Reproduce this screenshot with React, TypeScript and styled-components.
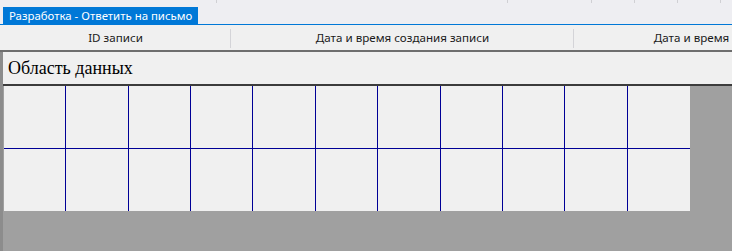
import React from 'react'
import styled, { createGlobalStyle } from 'styled-components'

const GlobalStyle = createGlobalStyle`
  html, body {
    margin: 0;
    padding: 0;
    background: #a0a0a0;
  }
`

const UI_FONT = `'Noto Sans', 'Open Sans', 'Liberation Sans', sans-serif`

const Window = styled.div`
  width: 732px;
  height: 251px;
  overflow: hidden;
  display: flex;
  flex-direction: column;
  background: #a0a0a0;
`

const TickStrip = styled.div`
  height: 7px;
  display: flex;
  background: #eeeef2;
`

const Tick = styled.div<{ w: number }>`
  width: ${(p) => p.w}px;
  flex: none;
  height: 3px;
  border-right: 1px solid #d0d0d4;
  box-sizing: border-box;
`

const TabBar = styled.div`
  height: 18px;
  display: flex;
  align-items: flex-end;
  padding-left: 3px;
  background: #eeeef2;
  border-bottom: 1px solid #0078d7;
  box-sizing: border-box;
`

const Tab = styled.div`
  height: 17px;
  width: 195px;
  background: #0078d7;
  color: #ffffff;
  font-family: ${UI_FONT};
  font-size: 11.4px;
  line-height: 17px;
  padding-left: 6px;
  box-sizing: border-box;
  white-space: nowrap;
  overflow: hidden;
`

const HeaderRow = styled.div`
  height: 27px;
  display: flex;
  background: #f0f0f0;
  border-bottom: 2px solid #6e6e6e;
  box-sizing: border-box;
  overflow: hidden;
`

const HeaderCell = styled.div<{ w: number; last?: boolean }>`
  width: ${(p) => p.w}px;
  flex: none;
  display: flex;
  align-items: center;
  justify-content: center;
  font-family: ${UI_FONT};
  font-size: 11.6px;
  color: #1a1a1a;
  white-space: nowrap;
  position: relative;
  &::after {
    content: '';
    display: ${(p) => (p.last ? 'none' : 'block')};
    position: absolute;
    right: 0;
    top: 4px;
    bottom: 2px;
    width: 1px;
    background: #d4d4d8;
  }
`

const Body = styled.div`
  flex: 1;
  display: flex;
  flex-direction: column;
  border-left: 3px solid #8c8c8c;
  background: #a0a0a0;
`

const Title = styled.div`
  height: 34px;
  display: flex;
  align-items: center;
  padding-left: 5px;
  background: #f0f0f0;
  font-family: 'Liberation Serif', 'Times New Roman', serif;
  font-size: 18px;
  color: #000;
  border-bottom: 2px solid #3c3c3c;
  box-sizing: border-box;
`

const Grid = styled.div`
  width: 686px;
  height: 125px;
  margin-left: 1px;
  display: grid;
  grid-template-columns: repeat(11, 1fr);
  grid-template-rows: repeat(2, 1fr);
  background: #f0f0f0;
`

const Cell = styled.div<{ lastCol: boolean; lastRow: boolean }>`
  border-right: ${(p) => (p.lastCol ? 'none' : '1px solid #000096')};
  border-bottom: ${(p) => (p.lastRow ? 'none' : '1px solid #000096')};
`

const ticks = [217, 291, 84, 43, 43, 43]

export default function App() {
  const cells = []
  for (let r = 0; r < 2; r++) {
    for (let c = 0; c < 11; c++) {
      cells.push(<Cell key={`${r}-${c}`} lastCol={c === 10} lastRow={r === 1} />)
    }
  }
  return (
    <>
      <GlobalStyle />
      <Window>
        <TickStrip>
          {ticks.map((w, i) => (
            <Tick key={i} w={w} />
          ))}
        </TickStrip>
        <TabBar>
          <Tab>Разработка - Ответить на письмо</Tab>
        </TabBar>
        <HeaderRow>
          <HeaderCell w={231}>ID записи</HeaderCell>
          <HeaderCell w={343}>Дата и время создания записи</HeaderCell>
          <HeaderCell w={343} last>
            Дата и время изменения записи
          </HeaderCell>
        </HeaderRow>
        <Body>
          <Title>Область данных</Title>
          <Grid>{cells}</Grid>
        </Body>
      </Window>
    </>
  )
}
